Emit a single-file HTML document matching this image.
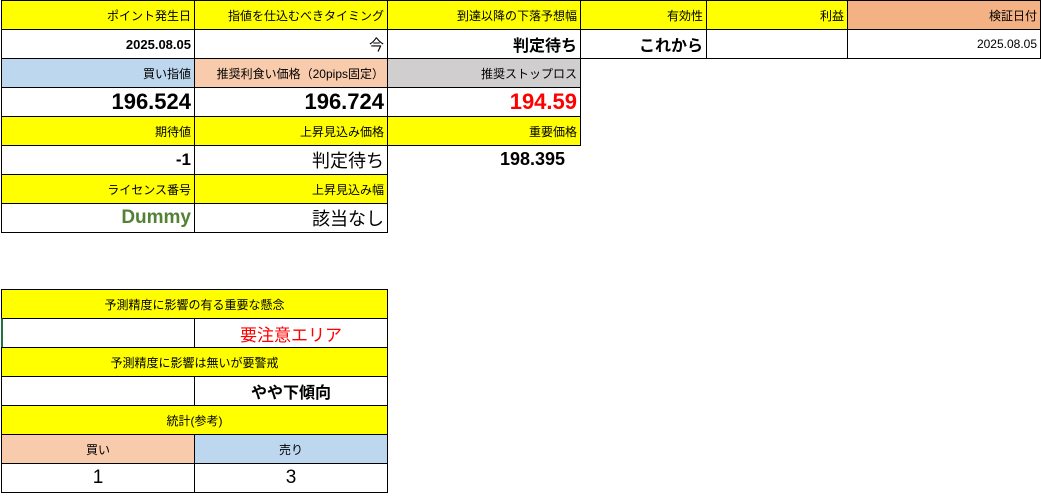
<!DOCTYPE html>
<html><head><meta charset="utf-8"><style>
body{margin:0;width:1041px;height:497px;background:#fff;position:relative;overflow:hidden;font-family:"Liberation Sans","Noto Sans CJK JP",sans-serif;}
.c{position:absolute;box-sizing:border-box;border:1px solid #000;display:flex;align-items:center;justify-content:flex-end;padding-right:3px;font-size:12px;color:#000;white-space:nowrap;overflow:hidden}
.y{background:#ffff00}.b{background:#bdd7ee}.p{background:#f8cbad}.g{background:#d0cece}.o{background:#f4b183}
.ce{justify-content:center;padding-right:0}
.bd{font-weight:bold}
</style></head><body>
<div class="c y" style="left:1px;top:0;width:194px;height:30px">ポイント発生日</div>
<div class="c y" style="left:194px;top:0;width:194px;height:30px">指値を仕込むべきタイミング</div>
<div class="c y" style="left:387px;top:0;width:194px;height:30px">到達以降の下落予想幅</div>
<div class="c y" style="left:580px;top:0;width:127px;height:30px">有効性</div>
<div class="c y" style="left:706px;top:0;width:142px;height:30px">利益</div>
<div class="c o" style="left:847px;top:0;width:194px;height:30px">検証日付</div>

<div class="c bd" style="left:1px;top:29px;width:194px;height:30px;font-size:13px">2025.08.05</div>
<div class="c" style="left:194px;top:29px;width:194px;height:30px;font-size:15px">今</div>
<div class="c bd" style="left:387px;top:29px;width:194px;height:30px;font-size:16px">判定待ち</div>
<div class="c bd" style="left:580px;top:29px;width:127px;height:30px;font-size:16px">これから</div>
<div class="c" style="left:706px;top:29px;width:142px;height:30px"></div>
<div class="c" style="left:847px;top:29px;width:194px;height:30px;font-size:12px">2025.08.05</div>

<div class="c b" style="left:1px;top:58px;width:194px;height:30px">買い指値</div>
<div class="c p" style="left:194px;top:58px;width:194px;height:30px">推奨利食い価格（20pips固定）</div>
<div class="c g" style="left:387px;top:58px;width:194px;height:30px">推奨ストップロス</div>

<div class="c bd" style="left:1px;top:87px;width:194px;height:30px;font-size:22px">196.524</div>
<div class="c bd" style="left:194px;top:87px;width:194px;height:30px;font-size:22px">196.724</div>
<div class="c bd" style="left:387px;top:87px;width:194px;height:30px;font-size:22px;color:#ff0000">194.59</div>

<div class="c y" style="left:1px;top:116px;width:194px;height:30px">期待値</div>
<div class="c y" style="left:194px;top:116px;width:194px;height:30px">上昇見込み価格</div>
<div class="c y" style="left:387px;top:116px;width:194px;height:30px">重要価格</div>

<div class="c bd" style="left:1px;top:145px;width:194px;height:30px;font-size:17px">-1</div>
<div class="c" style="left:194px;top:145px;width:194px;height:30px;font-size:18px">判定待ち</div>
<div style="position:absolute;left:500px;top:149px;font-size:18px;font-weight:bold">198.395</div>

<div class="c y" style="left:1px;top:174px;width:194px;height:30px">ライセンス番号</div>
<div class="c y" style="left:194px;top:174px;width:194px;height:30px">上昇見込み幅</div>

<div class="c bd" style="left:1px;top:203px;width:194px;height:30px;font-size:19px;color:#548235">Dummy</div>
<div class="c" style="left:194px;top:203px;width:194px;height:30px;font-size:18px">該当なし</div>

<div class="c y ce" style="left:1px;top:289px;width:387px;height:30px">予測精度に影響の有る重要な懸念</div>
<div class="c" style="left:1px;top:318px;width:194px;height:30px;border-left:2px solid #217346"></div>
<div class="c ce" style="left:194px;top:318px;width:194px;height:30px;font-size:17px;color:#ff0000">要注意エリア</div>
<div class="c y ce" style="left:1px;top:347px;width:387px;height:30px">予測精度に影響は無いが要警戒</div>
<div class="c" style="left:1px;top:376px;width:194px;height:30px"></div>
<div class="c ce bd" style="left:194px;top:376px;width:194px;height:30px;font-size:16px">やや下傾向</div>
<div class="c y ce" style="left:1px;top:405px;width:387px;height:30px">統計(参考)</div>
<div class="c p ce" style="left:1px;top:434px;width:194px;height:30px">買い</div>
<div class="c b ce" style="left:194px;top:434px;width:194px;height:30px">売り</div>
<div class="c ce" style="left:1px;top:463px;width:194px;height:30px;font-size:19px">1</div>
<div class="c ce" style="left:194px;top:463px;width:194px;height:30px;font-size:19px">3</div>
</body></html>
